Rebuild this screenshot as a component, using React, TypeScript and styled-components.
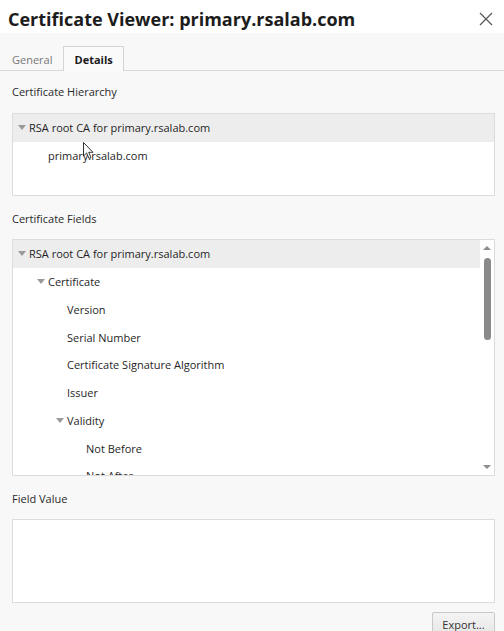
import styled, { createGlobalStyle } from 'styled-components';

const GlobalStyle = createGlobalStyle`
  html, body {
    margin: 0;
    padding: 0;
    background: #f8f8f8;
    font-family: "Open Sans", "Noto Sans", Arial, sans-serif;
    overflow: hidden;
  }
`;

type Node = { label: string; depth: number; open?: boolean; selected?: boolean };

const hierarchy: Node[] = [
  { label: 'RSA root CA for primary.rsalab.com', depth: 0, open: true, selected: true },
  { label: 'primary.rsalab.com', depth: 1 },
];

const fields: Node[] = [
  { label: 'RSA root CA for primary.rsalab.com', depth: 0, open: true, selected: true },
  { label: 'Certificate', depth: 1, open: true },
  { label: 'Version', depth: 2 },
  { label: 'Serial Number', depth: 2 },
  { label: 'Certificate Signature Algorithm', depth: 2 },
  { label: 'Issuer', depth: 2 },
  { label: 'Validity', depth: 2, open: true },
  { label: 'Not Before', depth: 3 },
  { label: 'Not After', depth: 3 },
  { label: 'Subject', depth: 2 },
];

const TreeRows = ({ nodes }: { nodes: Node[] }) => (
  <>
    {nodes.map((n, i) => (
      <Row key={i} $selected={n.selected} $depth={n.depth}>
        <Twisty>{n.open !== undefined && <Triangle />}</Twisty>
        <RowText>{n.label}</RowText>
      </Row>
    ))}
  </>
);

export default function App() {
  return (
    <>
      <GlobalStyle />
      <Dialog>
        <TitleBar>
          <Title>Certificate Viewer: primary.rsalab.com</Title>
          <CloseButton aria-label="Close">
            <svg width="14" height="14" viewBox="0 0 14 14">
              <path d="M1 1 L13 13 M13 1 L1 13" stroke="#555" strokeWidth="1.2" fill="none" />
            </svg>
          </CloseButton>
        </TitleBar>

        <Tabs>
          <Tab>General</Tab>
          <Tab $active>Details</Tab>
        </Tabs>

        <Content>
          <SectionLabel>Certificate Hierarchy</SectionLabel>
          <Box $height={83}>
            <TreeList>
              <TreeRows nodes={hierarchy} />
            </TreeList>
            <Cursor width="12" height="18" viewBox="0 0 12 18">
              <path
                d="M0.5 0.5 L0.5 14 L3.6 11 L6 16.5 L8 15.6 L5.7 10.3 L10 10.3 Z"
                fill="#fff"
                stroke="#333"
                strokeWidth="1"
              />
            </Cursor>
          </Box>

          <SectionLabel $spaced>Certificate Fields</SectionLabel>
          <Box $height={237}>
            <TreeList>
              <TreeRows nodes={fields} />
            </TreeList>
            <ScrollTrack>
              <ScrollArrow $up />
              <ScrollThumb />
              <ScrollSpacer />
              <ScrollArrow />
            </ScrollTrack>
          </Box>

          <SectionLabel $spaced>Field Value</SectionLabel>
          <Box $height={84} />

          <Footer>
            <ExportButton>Export...</ExportButton>
          </Footer>
        </Content>
      </Dialog>
    </>
  );
}

const Dialog = styled.div`
  width: 504px;
  height: 631px;
  display: flex;
  flex-direction: column;
  background: #f8f8f8;
  color: #1f1f1f;
  overflow: hidden;

  & > * {
    flex-shrink: 0;
  }
`;

const TitleBar = styled.div`
  height: 33px;
  background: #ffffff;
  display: flex;
  align-items: center;
  justify-content: space-between;
  padding: 0 10px 0 8px;
  box-sizing: border-box;
`;

const Title = styled.h1`
  margin: 0;
  font-size: 18px;
  font-weight: 700;
  color: #1c1c1c;
  padding-top: 4px;
`;

const CloseButton = styled.div`
  width: 16px;
  height: 16px;
  display: flex;
  align-items: center;
  justify-content: center;
  margin-top: 4px;
`;

const Tabs = styled.div`
  display: flex;
  align-items: flex-end;
  margin-top: 13px;
  padding-left: 1px;
  height: 24px;
  border-bottom: 1px solid #dadada;
`;

const Tab = styled.div<{ $active?: boolean }>`
  height: ${({ $active }) => ($active ? '25px' : '24px')};
  box-sizing: border-box;
  padding: 0 10px;
  display: flex;
  align-items: center;
  font-size: 11px;
  font-weight: ${({ $active }) => ($active ? 700 : 400)};
  color: ${({ $active }) => ($active ? '#1a1a1a' : '#777')};
  border: 1px solid ${({ $active }) => ($active ? '#d4d4d4' : 'transparent')};
  border-bottom: none;
  margin-bottom: -1px;
  background: ${({ $active }) => ($active ? '#fafafa' : 'transparent')};
`;

const Content = styled.div`
  display: flex;
  flex-direction: column;
  padding: 13px 9px 0 12px;
`;

const SectionLabel = styled.div<{ $spaced?: boolean }>`
  font-size: 11px;
  line-height: 16px;
  color: #2a2a2a;
  margin-top: ${({ $spaced }) => ($spaced ? '15px' : '0')};
  margin-bottom: ${({ $spaced }) => ($spaced ? '12px' : '13px')};
`;

const Box = styled.div<{ $height: number }>`
  position: relative;
  height: ${({ $height }) => $height}px;
  flex-shrink: 0;
  box-sizing: border-box;
  border: 1px solid #dcdcdc;
  background: #ffffff;
  display: flex;
  overflow: hidden;
`;

const TreeList = styled.div`
  flex: 1;
  display: flex;
  flex-direction: column;
  overflow: hidden;
`;

const Row = styled.div<{ $selected?: boolean; $depth: number }>`
  height: 27.75px;
  flex-shrink: 0;
  display: flex;
  align-items: center;
  padding-left: ${({ $depth }) => 3 + $depth * 19}px;
  background: ${({ $selected }) => ($selected ? '#ededed' : 'transparent')};
`;

const Twisty = styled.div`
  width: 12px;
  height: 12px;
  display: flex;
  align-items: center;
  justify-content: center;
  margin-right: 1px;
`;

const Triangle = styled.div`
  width: 0;
  height: 0;
  border-left: 4px solid transparent;
  border-right: 4px solid transparent;
  border-top: 5px solid #9a9a9a;
`;

const RowText = styled.span`
  font-size: 11px;
  color: #1f1f1f;
  white-space: nowrap;
`;

const Cursor = styled.svg`
  position: absolute;
  left: 70px;
  top: 28px;
`;

const ScrollTrack = styled.div`
  width: 14px;
  flex-shrink: 0;
  display: flex;
  flex-direction: column;
  align-items: center;
  padding: 6px 0 6px;
  box-sizing: border-box;
  background: #ffffff;
`;

const ScrollArrow = styled.div<{ $up?: boolean }>`
  width: 0;
  height: 0;
  border-left: 4px solid transparent;
  border-right: 4px solid transparent;
  ${({ $up }) => ($up ? 'border-bottom: 4px solid #8c8c8c;' : 'border-top: 4px solid #8c8c8c;')}
`;

const ScrollThumb = styled.div`
  width: 7px;
  height: 82px;
  margin-top: 8px;
  border-radius: 4px;
  background: #8a8a8a;
`;

const ScrollSpacer = styled.div`
  flex: 1;
`;

const Footer = styled.div`
  display: flex;
  justify-content: flex-end;
  margin-top: 9px;
`;

const ExportButton = styled.button`
  width: 63px;
  height: 24px;
  font-family: inherit;
  font-size: 11px;
  color: #333;
  background: linear-gradient(#f4f4f4, #e6e6e6);
  border: 1px solid #c8c8c8;
  border-radius: 2px;
  padding: 0;
`;
